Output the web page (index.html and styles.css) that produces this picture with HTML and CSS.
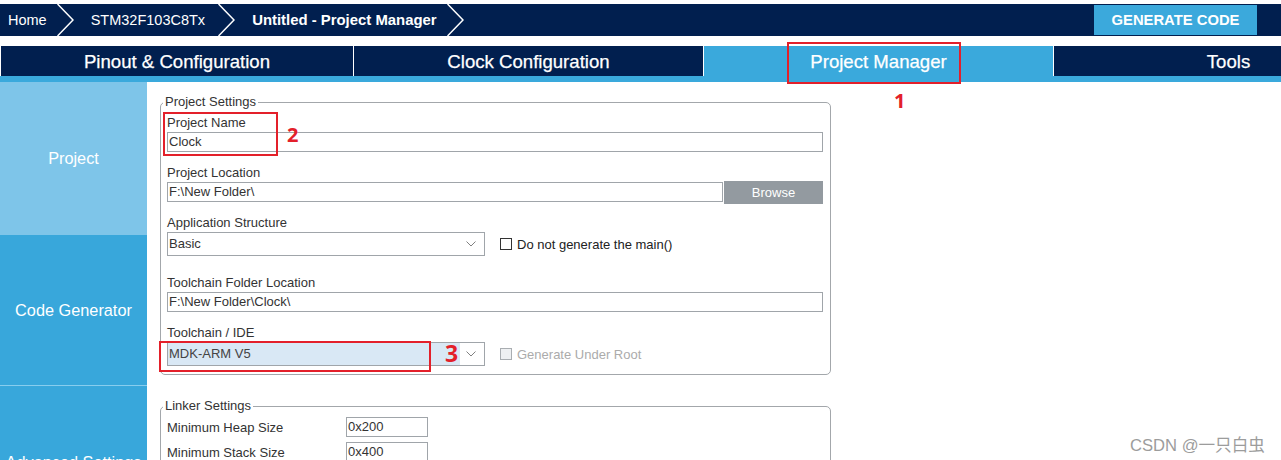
FILE: index.html
```html
<!DOCTYPE html>
<html lang="en">
<head>
<meta charset="utf-8">
<title>STM32CubeMX - Project Manager</title>
<link rel="stylesheet" href="styles.css">
</head>
<body>
<div class="app">
  <header class="topbar">
    <nav class="crumbs">
      <span class="crumb">Home</span>
      <svg class="chev" viewBox="0 0 17 32"><polyline points="0.5,0 16,16 0.5,32" fill="none" stroke="#fff" stroke-width="1.5"/></svg>
      <span class="crumb">STM32F103C8Tx</span>
      <svg class="chev chev-wide" viewBox="0 0 17 32"><polyline points="0.5,0 16,16 0.5,32" fill="none" stroke="#fff" stroke-width="1.5"/></svg>
      <span class="crumb crumb-cur">Untitled - Project Manager</span>
      <svg class="chev" viewBox="0 0 17 32"><polyline points="0.5,0 16,16 0.5,32" fill="none" stroke="#fff" stroke-width="1.5"/></svg>
    </nav>
    <button class="gen">GENERATE CODE</button>
  </header>

  <div class="tabs">
    <div class="tab tab-first">Pinout &amp; Configuration</div>
    <div class="tab">Clock Configuration</div>
    <div class="tab tab-active">Project Manager</div>
    <div class="tab">Tools</div>
  </div>
  <div class="strip"></div>

  <div class="body">
    <aside class="side">
      <div class="side-item side-sel">Project</div>
      <div class="side-item side-code">Code Generator</div>
      <div class="side-item side-adv">Advanced Settings</div>
    </aside>

    <main class="main">
      <fieldset class="group group-ps">
        <legend>Project Settings</legend>

        <div class="field">
          <div class="label">Project Name</div>
          <div class="input">Clock</div>
        </div>

        <div class="field">
          <div class="label">Project Location</div>
          <div class="row">
            <div class="input input-loc">F:\New Folder\</div>
            <div class="browse">Browse</div>
          </div>
        </div>

        <div class="field field-select">
          <div class="label">Application Structure</div>
          <div class="row row-center">
            <div class="select">
              <span class="select-text">Basic</span>
              <span class="select-arrow"><svg viewBox="0 0 10 6" width="10" height="6"><polyline points="0.5,0.5 5,5 9.5,0.5" fill="none" stroke="#808080" stroke-width="1"/></svg></span>
            </div>
            <label class="check"><span class="box"></span>Do not generate the main()</label>
          </div>
        </div>

        <div class="field">
          <div class="label">Toolchain Folder Location</div>
          <div class="input">F:\New Folder\Clock\</div>
        </div>

        <div class="field field-last">
          <div class="label">Toolchain / IDE</div>
          <div class="row row-center">
            <div class="select select-ide">
              <span class="select-text">MDK-ARM V5</span>
              <span class="select-arrow"><svg viewBox="0 0 10 6" width="10" height="6"><polyline points="0.5,0.5 5,5 9.5,0.5" fill="none" stroke="#808080" stroke-width="1"/></svg></span>
            </div>
            <label class="check check-dis"><span class="box"></span>Generate Under Root</label>
          </div>
        </div>
      </fieldset>

      <fieldset class="group group-linker">
        <legend>Linker Settings</legend>
        <div class="lrow">
          <div class="llabel">Minimum Heap Size</div>
          <div class="input input-small">0x200</div>
        </div>
        <div class="lrow">
          <div class="llabel">Minimum Stack Size</div>
          <div class="input input-small">0x400</div>
        </div>
      </fieldset>
    </main>
  </div>

  <div class="mark mark-1"></div>
  <div class="num num-1">1</div>
  <div class="mark mark-2"></div>
  <div class="num num-2">2</div>
  <div class="mark mark-3"></div>
  <div class="num num-3">3</div>

  <div class="watermark">CSDN @一只白虫</div>
</div>
</body>
</html>
```

FILE: styles.css
```css
* { box-sizing: border-box; }

html, body {
  margin: 0;
  height: 460px;
  overflow: hidden;
  background: #ffffff;
}

body {
  font-family: "Liberation Sans", Arial, sans-serif;
  color: #333333;
}

.app {
  position: relative;
  width: 1281px;
  height: 460px;
  overflow: hidden;
  padding-top: 4px;
}

/* ---------- top bar ---------- */
.topbar {
  height: 32px;
  background: #011f4f;
  display: flex;
  align-items: center;
  justify-content: space-between;
  color: #ffffff;
}

.crumbs {
  display: flex;
  align-items: center;
  height: 100%;
  padding-left: 8px;
  font-size: 14.5px;
}

.crumb { white-space: nowrap; }

.crumb-cur {
  font-weight: bold;
  font-size: 14.9px;
}

.chev {
  flex: none;
  width: 17px;
  height: 32px;
  margin: 0 17px 0 10px;
}

.chev-wide { margin-left: 13px; }

.gen {
  width: 163px;
  height: 30px;
  margin-right: 24px;
  border: none;
  background: #3ba9dc;
  color: #ffffff;
  font-family: "Liberation Sans", Arial, sans-serif;
  font-weight: bold;
  font-size: 14.8px;
  padding: 0;
}

/* ---------- tabs ---------- */
.tabs {
  margin-top: 10px;
  height: 30px;
  display: flex;
  gap: 1px;
  padding-left: 1px;
  background: #ffffff;
}

.tab {
  flex: none;
  width: 349px;
  height: 30px;
  line-height: 31px;
  text-align: center;
  background: #011f4f;
  color: #ffffff;
  font-size: 18.6px;
  white-space: nowrap;
  -webkit-text-stroke: 0.25px #ffffff;
}

.tab-first { width: 352px; }

.tab-active { background: #3aa9dc; }

.strip {
  height: 6px;
  background: #3aa9dc;
}

/* ---------- body ---------- */
.body {
  display: flex;
  align-items: flex-start;
}

.side {
  flex: none;
  width: 147px;
}

.side-item {
  display: flex;
  align-items: center;
  justify-content: center;
  color: #ffffff;
  font-size: 16.3px;
  white-space: nowrap;
  background: #38a7db;
  height: 150px;
}

.side-sel {
  height: 153px;
  background: #7ec5e9;
}

.side-code {
  border-bottom: 1px solid #88cdee;
  height: 151px;
}

.side-adv { padding-top: 2px; }

.main {
  padding: 12px 0 0 13px;
}

/* ---------- fieldsets ---------- */
.group {
  width: 671px;
  margin: 0;
  border: 1px solid #a3a7ab;
  border-radius: 5px;
  padding: 5px 7px 8px 6px;
  min-width: 0;
}

.group legend {
  font-size: 13px;
  line-height: 16px;
  padding: 0 2px;
  margin-left: -4px;
  color: #333333;
}

.group-linker {
  margin-top: 23px;
  padding-top: 3px;
  padding-bottom: 20px;
}

.field { margin-bottom: 13px; }
.field-select { margin-bottom: 19px; }
.field-last { margin-bottom: 0; }

.label {
  font-size: 13px;
  line-height: 15px;
  margin-bottom: 2px;
  color: #333333;
  white-space: nowrap;
}

.input {
  height: 20px;
  border: 1px solid #a0a5aa;
  background: #ffffff;
  font-size: 13px;
  line-height: 18px;
  padding-left: 1px;
  color: #333333;
  white-space: nowrap;
}

.row {
  display: flex;
  align-items: flex-start;
}

.row-center { align-items: center; }

.input-loc {
  flex: none;
  width: 556px;
}

.browse {
  flex: none;
  width: 99px;
  height: 23px;
  margin: -1px 0 -2px 1px;
  background: #939aa0;
  color: #ffffff;
  font-size: 13px;
  line-height: 23px;
  text-align: center;
}

.select {
  flex: none;
  width: 318px;
  height: 24px;
  border: 1px solid #a0a5aa;
  display: flex;
  background: #ffffff;
}

.select-text {
  flex: 1;
  font-size: 13px;
  line-height: 22px;
  padding-left: 1px;
  color: #333333;
}

.select-arrow {
  flex: none;
  width: 24px;
  display: flex;
  align-items: center;
  justify-content: center;
  padding-right: 3px;
}

.select-ide .select-text {
  background: #d9e8f5;
  color: #444444;
}

.check {
  display: flex;
  align-items: center;
  margin-left: 15px;
  font-size: 13px;
  color: #222222;
  white-space: nowrap;
}

.box {
  flex: none;
  width: 12px;
  height: 12px;
  border: 1px solid #333333;
  background: #ffffff;
  margin-right: 5px;
}

.check-dis { color: #ababab; }

.check-dis .box {
  border-color: #a9adb1;
  background: #eef0f2;
}

.lrow {
  display: flex;
  align-items: center;
  margin-bottom: 5px;
}

.llabel {
  flex: none;
  width: 179px;
  font-size: 13px;
  color: #333333;
  white-space: nowrap;
}

.input-small {
  width: 82px;
}

/* ---------- annotations (overlays) ---------- */
.mark {
  position: absolute;
  border: 2px solid #e3202a;
}

.mark-1 { left: 787px; top: 42px; width: 174px; height: 42px; }
.mark-2 { left: 163px; top: 112px; width: 115px; height: 44px; }
.mark-3 { left: 159px; top: 341px; width: 272px; height: 31px; }

.num {
  position: absolute;
  color: #e3202a;
  font-family: "Noto Sans", "Liberation Sans", sans-serif;
  font-weight: bold;
  line-height: 1;
}

.num-1 { left: 894px; top: 91px; font-size: 20px; }
.num-2 { left: 287px; top: 125px; font-size: 20px; }
.num-3 { left: 445px; top: 342px; font-size: 23px; }

.watermark {
  position: absolute;
  left: 1130px;
  top: 432px;
  font-family: "Liberation Sans", "Noto Sans CJK SC", sans-serif;
  font-size: 16.6px;
  color: #9c9c9c;
  white-space: nowrap;
}
```
